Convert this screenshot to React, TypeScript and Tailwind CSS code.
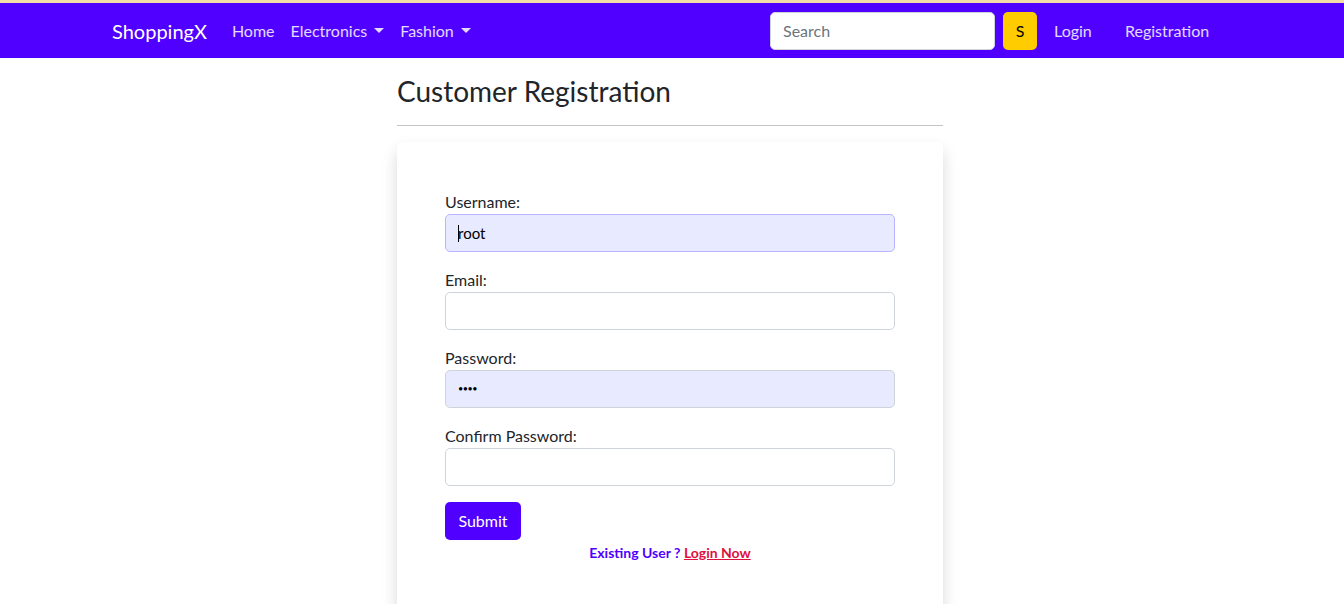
import React from 'react';

const NavLink: React.FC<{ label: string; caret?: boolean }> = ({ label, caret }) => (
    <a href="#" className="flex items-center px-2 text-white/85 hover:text-white">
        {label}
        {caret && (
            <span className="ml-[7px] inline-block h-0 w-0 border-x-[5px] border-t-[5px] border-x-transparent border-t-white/85" />
        )}
    </a>
);

const Field: React.FC<{
    label: string;
    type?: string;
    value?: string;
    filled?: boolean;
    focused?: boolean;
}> = ({ label, type = 'text', value = '', filled, focused }) => (
    <div className="mb-4">
        <label className="block leading-6 text-[#212529]">{label}</label>
        <div
            className={`flex h-[38px] w-full items-center rounded-[5px] border px-3 text-[15px] text-black ${
                filled ? 'bg-[#e8ebff]' : 'bg-white'
            } ${focused ? 'border-[#b9b4ff]' : 'border-[#ced4da]'}`}
        >
            {focused && <span className="-mr-[1px] h-[17px] w-[1px] bg-black" />}
            {type === 'password' ? (
                <span className="text-[9px] tracking-[-0.5px]">{'••••'}</span>
            ) : (
                <span>{value}</span>
            )}
        </div>
    </div>
);

const App: React.FC = () => {
    return (
        <div className="min-h-[604px] bg-white font-['Lato',sans-serif] text-base text-[#212529]">
            {/* top navbar */}
            <div className="h-[3px] bg-[#f2dca8]" />
            <nav className="h-[55px] bg-[#5000ff]">
                <div className="mx-auto flex h-full w-[1140px] items-center pl-[10px] pr-3">
                    <a href="#" className="mr-[17px] text-xl text-white">ShoppingX</a>
                    <div className="flex items-center">
                        <NavLink label="Home" />
                        <NavLink label="Electronics" caret />
                        <NavLink label="Fashion" caret />
                    </div>
                    <div className="ml-auto flex items-center">
                        <div className="flex h-[38px] w-[225px] items-center rounded-[5px] border border-[#ced4da] bg-white px-3 text-[#6c757d]">
                            Search
                        </div>
                        <button className="ml-2 h-[38px] w-[34px] rounded-[5px] bg-[#ffcc00] text-black">S</button>
                        <div className="ml-[9px] flex items-center">
                            <a href="#" className="w-[55px] px-2 text-white/85">Login</a>
                            <a href="#" className="ml-4 w-[102px] px-2 text-white/85">Registration</a>
                        </div>
                        <div className="w-[11px]" />
                    </div>
                </div>
            </nav>

            {/* page */}
            <div className="mx-auto w-[1140px]">
                <div className="ml-[295px] w-[546px]">
                    <h3 className="mt-[12px] text-[28px] leading-[42px] text-[#212529]">Customer Registration</h3>
                    <hr className="mt-[13px] border-t border-[#c4c4c4]" />
                    <div className="mt-4 rounded-md bg-white px-12 pt-12 pb-10 shadow-[0_8px_16px_rgba(0,0,0,0.15)]">
                        <Field label="Username:" value="root" filled focused />
                        <Field label="Email:" />
                        <Field label="Password:" type="password" filled />
                        <Field label="Confirm Password:" />
                        <button className="h-[38px] w-[76px] rounded-[5px] bg-[#5000ff] text-white">Submit</button>
                        <p className="mt-[2px] text-center text-[14px] font-bold text-[#5000ff]">
                            Existing User ?{' '}
                            <a href="#" className="text-[#e0103c] underline">Login Now</a>
                        </p>
                        <div className="h-10" />
                    </div>
                </div>
            </div>
        </div>
    );
};

export default App;
